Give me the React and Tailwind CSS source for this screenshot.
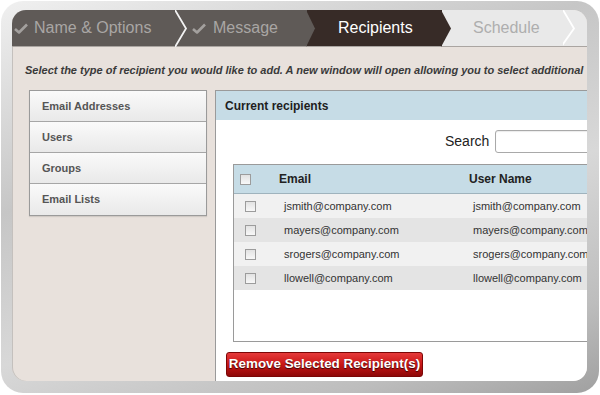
import React from "react";

const Check = () => (
  <svg width="14" height="11" viewBox="0 0 14 11" className="shrink-0">
    <path d="M1 6 L5 9.5 L13 1.5" fill="none" stroke="#a3a09e" strokeWidth="2.6" strokeLinejoin="round" />
  </svg>
);

const Box = ({ className = "" }) => (
  <span className={"inline-block w-[11px] h-[11px] shrink-0 border border-[#9c9c9c] bg-[linear-gradient(to_bottom,#e2e2e2,#f8f8f8)] " + className} />
);

const rows = [
  "jsmith@company.com",
  "mayers@company.com",
  "srogers@company.com",
  "llowell@company.com",
];

export default function App() {
  return (
    <div className="w-[600px] h-[395px] bg-white overflow-hidden font-['Liberation_Sans',Arial,sans-serif]">
      <div className="ml-[1px] mt-[1px] w-[598px] h-[392px] rounded-[22px] bg-[linear-gradient(160deg,#f0f0f0_0%,#c6c6c6_35%,#d8d8d8_60%,#bdbdbd_85%,#a0a0a0_100%)] pt-[9px] pl-[11px] pr-[12px] pb-[12px]">
        <div className="h-full rounded-[14px] overflow-hidden flex flex-col bg-[#e8e1dc] shadow-[inset_1px_0_0_#c4c0bd]">
          {/* Tabs */}
          <div className="flex h-[37px] shrink-0 bg-[#e9e9e9] border-b border-[#aaa5a1] text-[16px]">
            <div className="relative w-[165px] shrink-0 bg-[#5f5a57] flex items-center gap-[6px] pl-[2px] text-[#a9a6a4]">
              <Check />
              <span>Name &amp; Options</span>
              <svg width="14" height="37" viewBox="0 0 14 37" className="absolute right-[-12px] top-0 z-10">
                <polyline points="0,0 11,18.5 0,37" fill="none" stroke="#f2f2f2" strokeWidth="1.8" />
              </svg>
            </div>
            <div className="relative w-[130px] shrink-0 bg-[#5f5a57] flex items-center gap-[7px] pl-[15px] text-[#a9a6a4]">
              <Check />
              <span>Message</span>
              <svg width="10" height="37" viewBox="0 0 10 37" className="absolute right-[-9px] top-0 z-10">
                <polygon points="0,0 9,18.5 0,37" fill="#5f5a57" />
              </svg>
            </div>
            <div className="relative w-[135px] shrink-0 bg-[#372b27] flex items-center pl-[31px] text-white">
              <span>Recipients</span>
              <svg width="11" height="37" viewBox="0 0 11 37" className="absolute right-[-10px] top-0 z-10">
                <polygon points="0,0 10,18.5 0,37" fill="#372b27" />
              </svg>
            </div>
            <div className="relative w-[123px] shrink-0 flex items-center pl-[31px] text-[#aeaeae]">
              <span>Schedule</span>
              <svg width="14" height="37" viewBox="0 0 14 37" className="absolute right-[-12px] top-0 z-10">
                <polyline points="0,0 11,18.5 -2,37" fill="none" stroke="#ffffff" strokeWidth="1.8" />
              </svg>
            </div>
            <div className="flex-1" />
          </div>

          {/* Content */}
          <div className="flex-1 flex flex-col min-h-0">
            <p className="pt-[17px] pl-[13px] whitespace-nowrap text-[11px] leading-[13px] font-bold italic text-[#3a3a3a]">
              Select the type of recipient you would like to add. A new window will open allowing you to select additional
            </p>
            <div className="flex-1 flex mt-[13px] min-h-0">
              {/* Left nav */}
              <div className="ml-[17px] w-[178px] h-[126px] shrink-0 border border-[#9a9a9a] flex flex-col shadow-[0_1px_1px_rgba(0,0,0,0.1)]">
                {["Email Addresses", "Users", "Groups", "Email Lists"].map((t, i) => (
                  <div
                    key={t}
                    className={
                      "h-[31px] flex items-center pl-[12px] text-[11px] font-bold text-[#555] bg-[linear-gradient(to_bottom,#fafafa,#e9e9e9)] " +
                      (i < 3 ? "border-b border-[#a6a6a6]" : "")
                    }
                  >
                    {t}
                  </div>
                ))}
              </div>

              {/* Right panel */}
              <div className="ml-[8px] w-[400px] shrink-0 border-l border-t border-[#9a9a9a] bg-white flex flex-col">
                <div className="h-[29px] shrink-0 bg-[#c6dce6] flex items-center pl-[9px] text-[12px] font-bold text-[#1e1e1e]">
                  Current recipients
                </div>
                <div className="flex items-center mt-[10px] pl-[229px] gap-[6px]">
                  <span className="text-[14px] text-[#222]">Search</span>
                  <span className="w-[150px] h-[23px] rounded-[3px] border border-[#a9a9a9] bg-white shadow-[inset_0_1px_1px_rgba(0,0,0,0.08)]" />
                </div>
                <div className="ml-[17px] mt-[11px] w-[380px] h-[178px] border border-[#9a9a9a] bg-white flex flex-col">
                  <div className="h-[29px] shrink-0 bg-[#c6dce6] border-b border-[#9fb3bd] flex items-center pl-[6px] text-[12px] font-bold text-[#222]">
                    <Box />
                    <span className="ml-[28px] w-[190px]">Email</span>
                    <span>User Name</span>
                  </div>
                  {rows.map((r, i) => (
                    <div
                      key={r}
                      className={
                        "h-[24px] shrink-0 flex items-center pl-[11px] text-[11px] text-[#333] " +
                        (i % 2 === 0 ? "bg-[#f1f1f1]" : "bg-[#e4e4e4]")
                      }
                    >
                      <Box />
                      <span className="ml-[28px] w-[189px]">{r}</span>
                      <span>{r}</span>
                    </div>
                  ))}
                </div>
                <div className="ml-[10px] mt-[10px]">
                  <button className="w-[197px] h-[25px] px-0 whitespace-nowrap rounded-[3px] border border-[#7c0606] bg-[linear-gradient(to_bottom,#e53a3a,#c81616_50%,#8e0808)] text-white text-[13.4px] font-bold [text-shadow:0_1px_1px_rgba(0,0,0,0.7)] flex items-center justify-center">
                    Remove Selected Recipient(s)
                  </button>
                </div>
              </div>
            </div>
          </div>
        </div>
      </div>
    </div>
  );
}
